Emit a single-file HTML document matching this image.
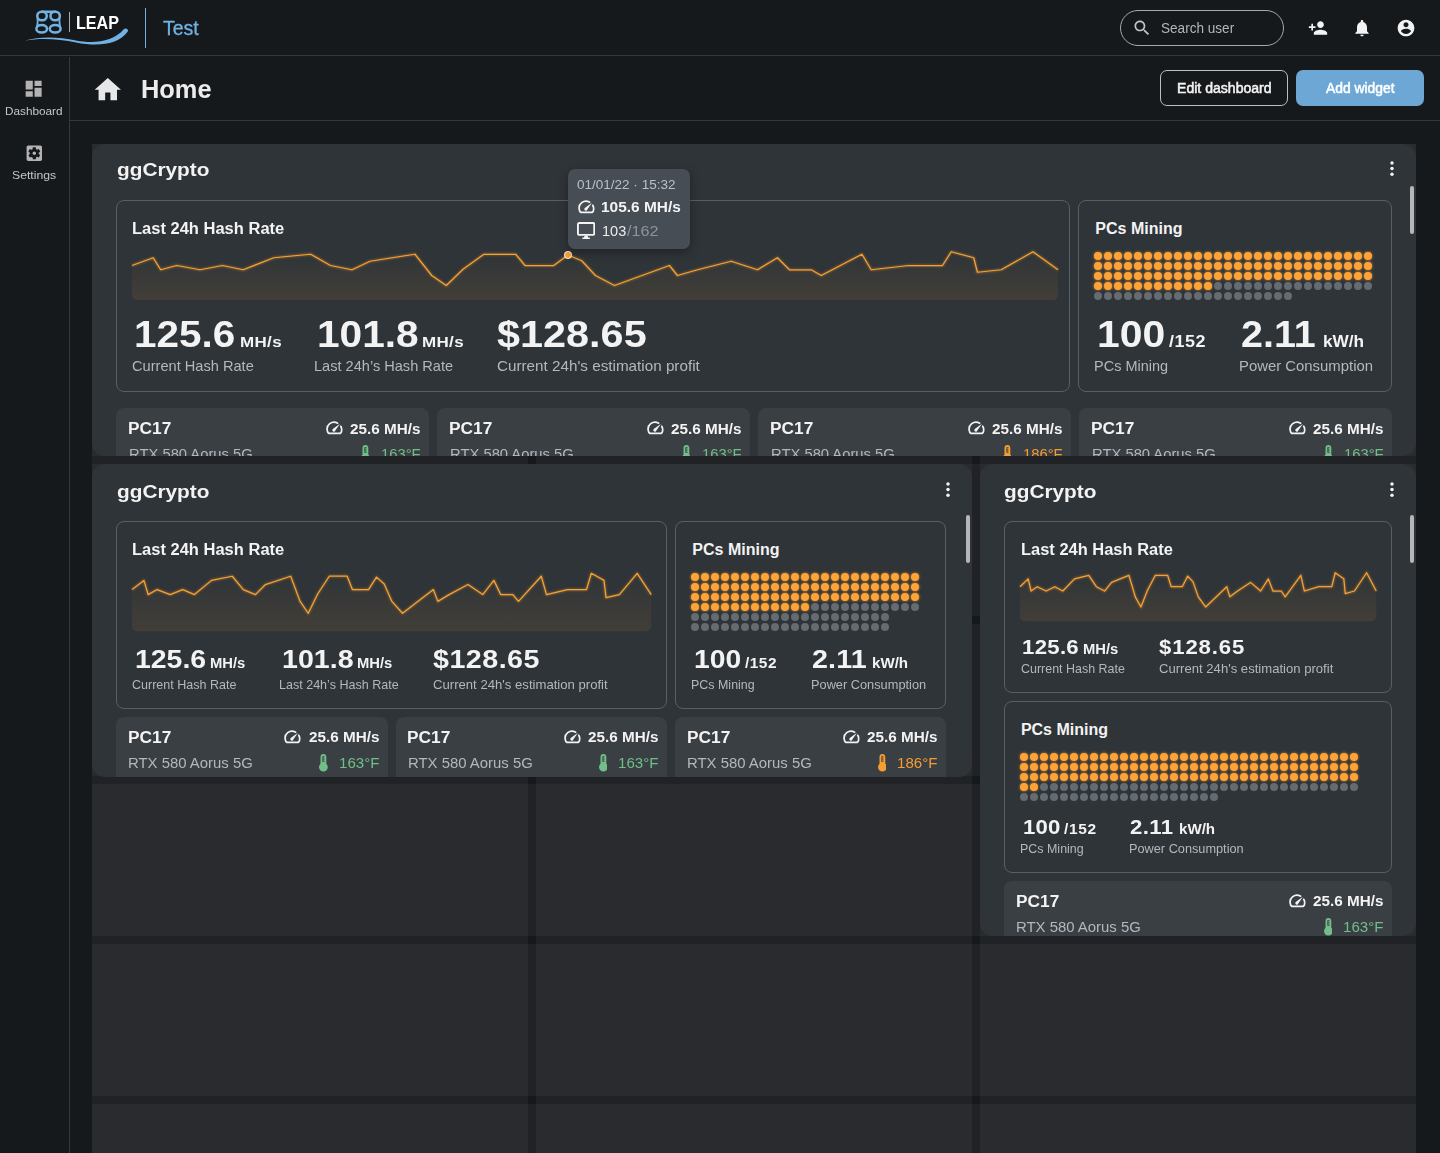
<!DOCTYPE html>
<html lang="en"><head><meta charset="utf-8"><title>ggLeap – Home</title>
<style>
*{box-sizing:border-box;margin:0;padding:0}
html,body{width:1440px;height:1153px;overflow:hidden;background:#16191c}
body{position:relative;font-family:"Liberation Sans",sans-serif;color:#f3f3f3}
.t{position:absolute;white-space:nowrap;transform-origin:0 50%;display:block}
.i{position:absolute;display:block}
.abs{position:absolute}
.w{position:absolute;background:#2f3438;border-radius:13px;overflow:hidden}
.p{position:absolute;border:1px solid #596065;border-radius:8px}
.c{position:absolute;background:#3a3f44;border-radius:8px;height:70px}
.dr{position:absolute;display:flex;gap:2px;height:8px}
.dr i{display:block;width:8px;height:8px;border-radius:50%;background:#646b71}
.dr i.o{background:#ffa336;box-shadow:0 0 3px rgba(255,163,54,.75)}
.sb{position:absolute;width:4px;border-radius:2px;background:#b4b7ba}
.col{position:absolute;top:144px;bottom:0;width:436px;background:rgba(255,255,255,.043)}
.row{position:absolute;left:92px;width:1324px;height:152px;background:rgba(255,255,255,.043)}
</style></head><body>

<header>
<div class="abs" style="left:0;top:55px;width:1440px;height:1px;background:#35393d"></div>
<svg class="i" style="left:20.00px;top:0.00px" width="120" height="56" viewBox="0 0 120 56" ><g fill="none" stroke="#72b2e3" stroke-width="2.5" stroke-linecap="round"><rect x="17.25" y="11.65" width="9.5" height="8.7" rx="4.3"/><rect x="30.45" y="11.65" width="9.4" height="8.7" rx="4.3"/><path d="M22 11.65H35"/><ellipse cx="21.7" cy="28.8" rx="5.35" ry="3.75"/><ellipse cx="35.2" cy="28.8" rx="5.45" ry="3.75"/><path d="M17.6 18Q17.9 22.5 17 27M39.5 18Q39.2 22.5 40.1 27" stroke-width="1.8"/></g><rect x="49" y="12" width="1" height="20" fill="#a9adb0"/><path fill="#72b2e3" d="M5 40.6C22 35.6 40 37.4 56 40.4 74 43.8 93 42 103.8 29.2 105.6 27.2 109.2 29.4 107.6 31.8 97 45.8 76 46.4 56 42.4 40 39.2 22 37.4 5 40.6Z"/></svg>
<span class="t" style="left:76.20px;top:10.00px;font-size:18.3px;line-height:25px;color:#ffffff;font-weight:700;transform:scaleX(0.8817);">LEAP</span>
<div class="abs" style="left:145px;top:8px;width:1.3px;height:40px;background:#72b2e3"></div>
<span class="t" style="left:163.24px;top:15.00px;font-size:19.4px;line-height:26px;color:#72b2e3;transform:scaleX(1.0056);-webkit-text-stroke:.3px;">Test</span>
<div class="abs" style="left:1120px;top:10px;width:164px;height:36px;border:1px solid #a6a9ab;border-radius:18px"></div>
<svg class="i" style="left:1131.80px;top:17.60px" width="20" height="20" viewBox="0 0 24 24" ><path fill="#c2c4c6" d="M15.5 14h-.79l-.28-.27C15.41 12.59 16 11.11 16 9.5 16 5.91 13.09 3 9.5 3S3 5.91 3 9.5 5.91 16 9.5 16c1.61 0 3.09-.59 4.23-1.57l.27.28v.79l5 4.99L20.49 19l-4.99-5zm-6 0C7.01 14 5 11.99 5 9.5S7.01 5 9.5 5 14 7.01 14 9.5 11.99 14 9.5 14z"/></svg>
<span class="t" style="left:1160.52px;top:19.00px;font-size:13.8px;line-height:19px;color:#b4b6b8;transform:scaleX(0.9836);">Search user</span>
<svg class="i" style="left:1308.00px;top:17.70px" width="20" height="20" viewBox="0 0 24 24" ><path fill="#f3f3f3" d="M15 12c2.21 0 4-1.79 4-4s-1.79-4-4-4-4 1.79-4 4 1.79 4 4 4zm-9-2V7H4v3H1v2h3v3h2v-3h3v-2H6zm9 4c-2.67 0-8 1.34-8 4v2h16v-2c0-2.66-5.33-4-8-4z"/></svg>
<svg class="i" style="left:1352.00px;top:18.00px" width="20" height="20" viewBox="0 0 24 24" ><path fill="#f3f3f3" d="M12 22c1.1 0 2-.9 2-2h-4c0 1.1.89 2 2 2zm6-6v-5c0-3.07-1.64-5.64-4.5-6.32V4c0-.83-.67-1.5-1.5-1.5s-1.5.67-1.5 1.5v.68C7.63 5.36 6 7.92 6 11v5l-2 2v1h16v-1l-2-2z"/></svg>
<svg class="i" style="left:1396.00px;top:18.00px" width="20" height="20" viewBox="0 0 24 24" ><path fill="#f3f3f3" d="M12 2C6.48 2 2 6.48 2 12s4.48 10 10 10 10-4.48 10-10S17.52 2 12 2zm0 3c1.66 0 3 1.34 3 3s-1.34 3-3 3-3-1.34-3-3 1.34-3 3-3zm0 14.2c-2.5 0-4.71-1.28-6-3.22.03-1.99 4-3.08 6-3.08 1.99 0 5.97 1.09 6 3.08-1.29 1.94-3.5 3.22-6 3.22z"/></svg>
</header>
<nav>
<div class="abs" style="left:69px;top:57px;width:1px;height:1096px;background:#35393d"></div>
<svg class="i" style="left:23.40px;top:78.20px" width="21.3" height="21.3" viewBox="0 0 24 24" ><path fill="#b3b3b3" d="M3 13h8V3H3v10zm0 8h8v-6H3v6zm10 0h8V11h-8v10zm0-18v6h8V3h-8z"/></svg>
<span class="t" style="left:4.54px;top:103.00px;font-size:11.6px;line-height:16px;color:#c6c6c6;transform:scaleX(1.0137);">Dashboard</span>
<svg class="i" style="left:23.80px;top:142.75px" width="20.6" height="20.6" viewBox="0 0 24 24" ><path fill="#b3b3b3" d="M12 10c-1.1 0-2 .9-2 2s.9 2 2 2 2-.9 2-2-.9-2-2-2zm7-7H5c-1.11 0-2 .9-2 2v14c0 1.1.89 2 2 2h14c1.11 0 2-.9 2-2V5c0-1.1-.89-2-2-2zm-1.75 9c0 .23-.02.46-.05.68l1.48 1.16c.13.11.17.3.08.45l-1.4 2.42c-.09.15-.27.21-.43.15l-1.74-.7c-.36.28-.76.51-1.18.69l-.26 1.85c-.03.17-.18.3-.35.3h-2.8c-.17 0-.32-.13-.35-.29l-.26-1.85c-.43-.18-.82-.41-1.18-.69l-1.74.7c-.16.06-.34 0-.43-.15l-1.4-2.42c-.09-.15-.05-.34.08-.45l1.48-1.16c-.03-.23-.05-.46-.05-.69 0-.23.02-.46.05-.68l-1.48-1.16c-.13-.11-.17-.3-.08-.45l1.4-2.42c.09-.15.27-.21.43-.15l1.74.7c.36-.28.76-.51 1.18-.69l.26-1.85c.03-.17.18-.3.35-.3h2.8c.17 0 .32.13.35.29l.26 1.85c.43.18.82.41 1.18.69l1.74-.7c.16-.06.34 0 .43.15l1.4 2.42c.09.15.05.34-.08.45l-1.48 1.16c.03.23.05.46.05.69z"/></svg>
<span class="t" style="left:11.88px;top:167.00px;font-size:11.6px;line-height:16px;color:#c6c6c6;transform:scaleX(1.0550);">Settings</span>
</nav>
<section>
<div class="abs" style="left:70px;top:120px;width:1370px;height:1px;background:#35393d"></div>
<svg class="i" style="left:92.20px;top:74.40px" width="31.6" height="31.6" viewBox="0 0 24 24" ><path fill="#e6e7e7" d="M10 20v-6h4v6h5v-8h3L12 3 2 12h3v8z"/></svg>
<span class="t" style="left:140.72px;top:73.00px;font-size:25.2px;line-height:32px;color:#ececec;font-weight:700;transform:scaleX(1.0075);">Home</span>
<div class="abs" style="left:1160px;top:70px;width:128px;height:36px;border:1px solid #bcbfc1;border-radius:7px"></div>
<span class="t" style="left:1176.80px;top:79.00px;font-size:13.8px;line-height:19px;color:#f4f4f4;-webkit-text-stroke:.5px;transform:scaleX(1.0193);">Edit dashboard</span>
<div class="abs" style="left:1296px;top:70px;width:128px;height:36px;background:#6ca7d5;border-radius:7px"></div>
<span class="t" style="left:1325.60px;top:79.00px;font-size:13.8px;line-height:19px;color:#ffffff;-webkit-text-stroke:.5px;transform:scaleX(1.0045);">Add widget</span>
</section>
<main>
<div class="col" style="left:92px"></div>
<div class="col" style="left:536px"></div>
<div class="col" style="left:980px"></div>
<div class="row" style="top:144px"></div>
<div class="row" style="top:304px"></div>
<div class="row" style="top:464px"></div>
<div class="row" style="top:624px"></div>
<div class="row" style="top:784px"></div>
<div class="row" style="top:944px"></div>
<div class="row" style="top:1104px"></div>
<article class="w" style="left:92px;top:144px;width:1324px;height:312px"><div class="abs" style="left:-92px;top:-144px;width:0;height:0"><span class="t" style="left:116.79px;top:157.00px;font-size:19px;line-height:25px;color:#f3f3f3;font-weight:700;transform:scaleX(1.0943);">ggCrypto</span><svg class="i" style="left:1389.90px;top:160.50px" width="4" height="15.2" viewBox="0 0 4 15.2" ><circle cx="2" cy="2" r="1.75" fill="#f3f3f3"/><circle cx="2" cy="7.6" r="1.75" fill="#f3f3f3"/><circle cx="2" cy="13.2" r="1.75" fill="#f3f3f3"/></svg><div class="sb" style="left:1410px;top:186px;height:48px"></div><div class="p" style="left:116px;top:200px;width:954px;height:192px"></div><span class="t" style="left:132.44px;top:218.00px;font-size:16px;line-height:21px;color:#f3f3f3;font-weight:700;transform:scaleX(1.0313);">Last 24h Hash Rate</span><svg class="i" style="left:132px;top:246px;overflow:visible" width="926" height="54" viewBox="0 0 926 54"><defs><linearGradient id="cg1" x1="0" y1="0" x2="0" y2="1"><stop offset="0" stop-color="#f7a033" stop-opacity="0"/><stop offset="1" stop-color="#f7a033" stop-opacity="0.097"/></linearGradient><filter id="cf1" x="-5%" y="-30%" width="110%" height="160%"><feGaussianBlur stdDeviation="1.3"/></filter></defs><path d="M0.00 19.50L21.21 11.75L28.71 23.75L44.73 19.50L67.97 23.75L90.47 19.50L111.21 23.75L141.77 11.75L178.72 8.25L198.44 19.50L220.02 23.75L237.98 15.25L282.99 8.25L299.75 29.50L314.28 39.50L331.04 23.25L351.79 8.25L383.73 8.25L392.99 19.50L421.79 19.50L435.96 9.00L449.76 14.75L463.46 29.50L482.45 39.50L537.45 19.50L545.41 29.50L565.51 23.75L599.21 15.25L625.51 23.75L645.42 11.75L657.46 23.75L679.22 23.75L689.22 29.50L729.97 8.25L739.23 23.75L776.73 19.50L810.53 19.50L819.23 5.75L841.73 11.75L845.44 26.25L869.24 23.75L901.00 5.75L926.00 23.75L926.00 48.00Q926.00 54.00 920.00 54.00L6 54.00Q0 54.00 0 48.00Z" fill="url(#cg1)"/><path d="M0.00 19.50L21.21 11.75L28.71 23.75L44.73 19.50L67.97 23.75L90.47 19.50L111.21 23.75L141.77 11.75L178.72 8.25L198.44 19.50L220.02 23.75L237.98 15.25L282.99 8.25L299.75 29.50L314.28 39.50L331.04 23.25L351.79 8.25L383.73 8.25L392.99 19.50L421.79 19.50L435.96 9.00L449.76 14.75L463.46 29.50L482.45 39.50L537.45 19.50L545.41 29.50L565.51 23.75L599.21 15.25L625.51 23.75L645.42 11.75L657.46 23.75L679.22 23.75L689.22 29.50L729.97 8.25L739.23 23.75L776.73 19.50L810.53 19.50L819.23 5.75L841.73 11.75L845.44 26.25L869.24 23.75L901.00 5.75L926.00 23.75" fill="none" stroke="#f7a033" stroke-opacity=".4" stroke-width="2.2" filter="url(#cf1)"/><path d="M0.00 19.50L21.21 11.75L28.71 23.75L44.73 19.50L67.97 23.75L90.47 19.50L111.21 23.75L141.77 11.75L178.72 8.25L198.44 19.50L220.02 23.75L237.98 15.25L282.99 8.25L299.75 29.50L314.28 39.50L331.04 23.25L351.79 8.25L383.73 8.25L392.99 19.50L421.79 19.50L435.96 9.00L449.76 14.75L463.46 29.50L482.45 39.50L537.45 19.50L545.41 29.50L565.51 23.75L599.21 15.25L625.51 23.75L645.42 11.75L657.46 23.75L679.22 23.75L689.22 29.50L729.97 8.25L739.23 23.75L776.73 19.50L810.53 19.50L819.23 5.75L841.73 11.75L845.44 26.25L869.24 23.75L901.00 5.75L926.00 23.75" fill="none" stroke="#f7a033" stroke-width="1.25" stroke-linejoin="round"/></svg><span class="t" style="left:134.19px;top:311.00px;font-size:37.6px;line-height:46px;color:#f3f3f3;font-weight:700;transform:scaleX(1.0763);">125.6</span><span class="t" style="left:239.54px;top:331.00px;font-size:15.2px;line-height:21px;color:#f3f3f3;font-weight:700;letter-spacing:0.292px;transform:scaleX(1.1200);">MH/s</span><span class="t" style="left:132.34px;top:356.00px;font-size:14.2px;line-height:20px;color:#b3b8bd;transform:scaleX(1.0297);">Current Hash Rate</span><span class="t" style="left:316.64px;top:311.00px;font-size:37.6px;line-height:46px;color:#f3f3f3;font-weight:700;transform:scaleX(1.0810);">101.8</span><span class="t" style="left:421.54px;top:331.00px;font-size:15.2px;line-height:21px;color:#f3f3f3;font-weight:700;letter-spacing:0.292px;transform:scaleX(1.1200);">MH/s</span><span class="t" style="left:313.54px;top:356.00px;font-size:14.2px;line-height:20px;color:#b3b8bd;transform:scaleX(1.0272);">Last 24h’s Hash Rate</span><span class="t" style="left:497.24px;top:311.00px;font-size:37.6px;line-height:46px;color:#f3f3f3;font-weight:700;transform:scaleX(1.1019);">$128.65</span><span class="t" style="left:496.79px;top:356.00px;font-size:14.2px;line-height:20px;color:#b3b8bd;transform:scaleX(1.0739);">Current 24h&#x27;s estimation profit</span><div class="p" style="left:1078px;top:200px;width:314px;height:192px"></div><span class="t" style="left:1095.34px;top:218.00px;font-size:16px;line-height:21px;color:#f3f3f3;font-weight:700;">PCs Mining</span><div class="dr" style="left:1094px;top:252.2px"><i class="o"></i><i class="o"></i><i class="o"></i><i class="o"></i><i class="o"></i><i class="o"></i><i class="o"></i><i class="o"></i><i class="o"></i><i class="o"></i><i class="o"></i><i class="o"></i><i class="o"></i><i class="o"></i><i class="o"></i><i class="o"></i><i class="o"></i><i class="o"></i><i class="o"></i><i class="o"></i><i class="o"></i><i class="o"></i><i class="o"></i><i class="o"></i><i class="o"></i><i class="o"></i><i class="o"></i><i class="o"></i></div><div class="dr" style="left:1094px;top:262.2px"><i class="o"></i><i class="o"></i><i class="o"></i><i class="o"></i><i class="o"></i><i class="o"></i><i class="o"></i><i class="o"></i><i class="o"></i><i class="o"></i><i class="o"></i><i class="o"></i><i class="o"></i><i class="o"></i><i class="o"></i><i class="o"></i><i class="o"></i><i class="o"></i><i class="o"></i><i class="o"></i><i class="o"></i><i class="o"></i><i class="o"></i><i class="o"></i><i class="o"></i><i class="o"></i><i class="o"></i><i class="o"></i></div><div class="dr" style="left:1094px;top:272.2px"><i class="o"></i><i class="o"></i><i class="o"></i><i class="o"></i><i class="o"></i><i class="o"></i><i class="o"></i><i class="o"></i><i class="o"></i><i class="o"></i><i class="o"></i><i class="o"></i><i class="o"></i><i class="o"></i><i class="o"></i><i class="o"></i><i class="o"></i><i class="o"></i><i class="o"></i><i class="o"></i><i class="o"></i><i class="o"></i><i class="o"></i><i class="o"></i><i class="o"></i><i class="o"></i><i class="o"></i><i class="o"></i></div><div class="dr" style="left:1094px;top:282.2px"><i class="o"></i><i class="o"></i><i class="o"></i><i class="o"></i><i class="o"></i><i class="o"></i><i class="o"></i><i class="o"></i><i class="o"></i><i class="o"></i><i class="o"></i><i class="o"></i><i></i><i></i><i></i><i></i><i></i><i></i><i></i><i></i><i></i><i></i><i></i><i></i><i></i><i></i><i></i><i></i></div><div class="dr" style="left:1094px;top:292.2px"><i></i><i></i><i></i><i></i><i></i><i></i><i></i><i></i><i></i><i></i><i></i><i></i><i></i><i></i><i></i><i></i><i></i><i></i><i></i><i></i></div><span class="t" style="left:1096.64px;top:311.00px;font-size:37.6px;line-height:46px;color:#f3f3f3;font-weight:700;transform:scaleX(1.0872);">100</span><span class="t" style="left:1168.79px;top:331.00px;font-size:16px;line-height:21px;color:#f3f3f3;font-weight:700;letter-spacing:0.496px;transform:scaleX(1.1200);">/152</span><span class="t" style="left:1093.54px;top:356.00px;font-size:14.2px;line-height:20px;color:#b3b8bd;transform:scaleX(1.0218);">PCs Mining</span><span class="t" style="left:1240.89px;top:311.00px;font-size:37.6px;line-height:46px;color:#f3f3f3;font-weight:700;transform:scaleX(1.0507);">2.11</span><span class="t" style="left:1322.99px;top:330.00px;font-size:16.4px;line-height:22px;color:#f3f3f3;font-weight:700;transform:scaleX(1.0491);">kW/h</span><span class="t" style="left:1238.54px;top:356.00px;font-size:14.2px;line-height:20px;color:#b3b8bd;transform:scaleX(1.0489);">Power Consumption</span><div class="c" style="left:116px;top:408.2px;width:313px"></div><span class="t" style="left:127.89px;top:418.00px;font-size:16px;line-height:21px;color:#f3f3f3;font-weight:700;transform:scaleX(1.0805);">PC17</span><span class="t" style="left:349.79px;top:419.00px;font-size:14.8px;line-height:20px;color:#f3f3f3;font-weight:700;transform:scaleX(1.0312);">25.6 MH/s</span><svg class="i" style="left:325.60px;top:420.70px" width="17" height="14.2" viewBox="0 0 18 15" ><g fill="none" stroke="#f3f3f3" stroke-width="1.8" stroke-linecap="round" stroke-linejoin="round"><path d="M12.3 2.3A7.3 7.3 0 0 0 1.6 10.9Q1.9 13.1 4.0 13.1L14.0 13.1Q16.1 13.1 16.4 10.9A7.3 7.3 0 0 0 15.6 5.6"/></g><path fill="#f3f3f3" d="M14.8 2.8L9.9 10.1A1.65 1.65 0 1 1 7.5 8.1Z"/></svg><span class="t" style="left:128.60px;top:444.00px;font-size:14px;line-height:20px;color:#b3b8bd;transform:scaleX(1.0559);">RTX 580 Aorus 5G</span><span class="t" style="left:381.00px;top:444.00px;font-size:14px;line-height:20px;color:#72bd88;transform:scaleX(1.0554);">163°F</span><svg class="i" style="left:360.65px;top:445.25px" width="8.8" height="17.65" viewBox="0 0 8.8 17.65" ><path fill="#72bd88" d="M4.4 0A2.9 2.9 0 0 1 7.3 2.9V9.8A4.4 4.4 0 1 1 1.5 9.8V2.9A2.9 2.9 0 0 1 4.4 0Z"/><path fill="#2c3540" fill-opacity=".9" d="M3.35 2.3h2.2v.95h-1.2v1.3h1.2v.95h-1.2v1.3h1.2v.95h-2.2z"/></svg><div class="c" style="left:437px;top:408.2px;width:313px"></div><span class="t" style="left:448.89px;top:418.00px;font-size:16px;line-height:21px;color:#f3f3f3;font-weight:700;transform:scaleX(1.0805);">PC17</span><span class="t" style="left:670.79px;top:419.00px;font-size:14.8px;line-height:20px;color:#f3f3f3;font-weight:700;transform:scaleX(1.0312);">25.6 MH/s</span><svg class="i" style="left:646.60px;top:420.70px" width="17" height="14.2" viewBox="0 0 18 15" ><g fill="none" stroke="#f3f3f3" stroke-width="1.8" stroke-linecap="round" stroke-linejoin="round"><path d="M12.3 2.3A7.3 7.3 0 0 0 1.6 10.9Q1.9 13.1 4.0 13.1L14.0 13.1Q16.1 13.1 16.4 10.9A7.3 7.3 0 0 0 15.6 5.6"/></g><path fill="#f3f3f3" d="M14.8 2.8L9.9 10.1A1.65 1.65 0 1 1 7.5 8.1Z"/></svg><span class="t" style="left:449.60px;top:444.00px;font-size:14px;line-height:20px;color:#b3b8bd;transform:scaleX(1.0559);">RTX 580 Aorus 5G</span><span class="t" style="left:702.00px;top:444.00px;font-size:14px;line-height:20px;color:#72bd88;transform:scaleX(1.0554);">163°F</span><svg class="i" style="left:681.65px;top:445.25px" width="8.8" height="17.65" viewBox="0 0 8.8 17.65" ><path fill="#72bd88" d="M4.4 0A2.9 2.9 0 0 1 7.3 2.9V9.8A4.4 4.4 0 1 1 1.5 9.8V2.9A2.9 2.9 0 0 1 4.4 0Z"/><path fill="#2c3540" fill-opacity=".9" d="M3.35 2.3h2.2v.95h-1.2v1.3h1.2v.95h-1.2v1.3h1.2v.95h-2.2z"/></svg><div class="c" style="left:758px;top:408.2px;width:313px"></div><span class="t" style="left:769.89px;top:418.00px;font-size:16px;line-height:21px;color:#f3f3f3;font-weight:700;transform:scaleX(1.0805);">PC17</span><span class="t" style="left:991.79px;top:419.00px;font-size:14.8px;line-height:20px;color:#f3f3f3;font-weight:700;transform:scaleX(1.0312);">25.6 MH/s</span><svg class="i" style="left:967.60px;top:420.70px" width="17" height="14.2" viewBox="0 0 18 15" ><g fill="none" stroke="#f3f3f3" stroke-width="1.8" stroke-linecap="round" stroke-linejoin="round"><path d="M12.3 2.3A7.3 7.3 0 0 0 1.6 10.9Q1.9 13.1 4.0 13.1L14.0 13.1Q16.1 13.1 16.4 10.9A7.3 7.3 0 0 0 15.6 5.6"/></g><path fill="#f3f3f3" d="M14.8 2.8L9.9 10.1A1.65 1.65 0 1 1 7.5 8.1Z"/></svg><span class="t" style="left:770.60px;top:444.00px;font-size:14px;line-height:20px;color:#b3b8bd;transform:scaleX(1.0559);">RTX 580 Aorus 5G</span><span class="t" style="left:1023.00px;top:444.00px;font-size:14px;line-height:20px;color:#f59d32;transform:scaleX(1.0554);">186°F</span><svg class="i" style="left:1002.65px;top:445.25px" width="8.8" height="17.65" viewBox="0 0 8.8 17.65" ><path fill="#f59d32" d="M4.4 0A2.9 2.9 0 0 1 7.3 2.9V9.8A4.4 4.4 0 1 1 1.5 9.8V2.9A2.9 2.9 0 0 1 4.4 0Z"/><path fill="#2c3540" fill-opacity=".9" d="M3.35 2.3h2.2v.95h-1.2v1.3h1.2v.95h-1.2v1.3h1.2v.95h-2.2z"/></svg><div class="c" style="left:1079px;top:408.2px;width:313px"></div><span class="t" style="left:1090.89px;top:418.00px;font-size:16px;line-height:21px;color:#f3f3f3;font-weight:700;transform:scaleX(1.0805);">PC17</span><span class="t" style="left:1312.79px;top:419.00px;font-size:14.8px;line-height:20px;color:#f3f3f3;font-weight:700;transform:scaleX(1.0312);">25.6 MH/s</span><svg class="i" style="left:1288.60px;top:420.70px" width="17" height="14.2" viewBox="0 0 18 15" ><g fill="none" stroke="#f3f3f3" stroke-width="1.8" stroke-linecap="round" stroke-linejoin="round"><path d="M12.3 2.3A7.3 7.3 0 0 0 1.6 10.9Q1.9 13.1 4.0 13.1L14.0 13.1Q16.1 13.1 16.4 10.9A7.3 7.3 0 0 0 15.6 5.6"/></g><path fill="#f3f3f3" d="M14.8 2.8L9.9 10.1A1.65 1.65 0 1 1 7.5 8.1Z"/></svg><span class="t" style="left:1091.60px;top:444.00px;font-size:14px;line-height:20px;color:#b3b8bd;transform:scaleX(1.0559);">RTX 580 Aorus 5G</span><span class="t" style="left:1344.00px;top:444.00px;font-size:14px;line-height:20px;color:#72bd88;transform:scaleX(1.0554);">163°F</span><svg class="i" style="left:1323.65px;top:445.25px" width="8.8" height="17.65" viewBox="0 0 8.8 17.65" ><path fill="#72bd88" d="M4.4 0A2.9 2.9 0 0 1 7.3 2.9V9.8A4.4 4.4 0 1 1 1.5 9.8V2.9A2.9 2.9 0 0 1 4.4 0Z"/><path fill="#2c3540" fill-opacity=".9" d="M3.35 2.3h2.2v.95h-1.2v1.3h1.2v.95h-1.2v1.3h1.2v.95h-2.2z"/></svg></div></article>
<article class="w" style="left:92px;top:464px;width:880px;height:312.6px"><div class="abs" style="left:-92px;top:-464px;width:0;height:0"><span class="t" style="left:116.79px;top:479.00px;font-size:19px;line-height:25px;color:#f3f3f3;font-weight:700;transform:scaleX(1.0943);">ggCrypto</span><svg class="i" style="left:946.00px;top:481.50px" width="4" height="15.2" viewBox="0 0 4 15.2" ><circle cx="2" cy="2" r="1.75" fill="#f3f3f3"/><circle cx="2" cy="7.6" r="1.75" fill="#f3f3f3"/><circle cx="2" cy="13.2" r="1.75" fill="#f3f3f3"/></svg><div class="sb" style="left:966px;top:515px;height:48px"></div><div class="p" style="left:116px;top:521px;width:551px;height:188px"></div><span class="t" style="left:132.44px;top:539.00px;font-size:16px;line-height:21px;color:#f3f3f3;font-weight:700;transform:scaleX(1.0313);">Last 24h Hash Rate</span><svg class="i" style="left:132px;top:566px;overflow:visible" width="519.25" height="65.20000000000005" viewBox="0 0 519.25 65.20000000000005"><defs><linearGradient id="cg2" x1="0" y1="0" x2="0" y2="1"><stop offset="0" stop-color="#f7a033" stop-opacity="0"/><stop offset="1" stop-color="#f7a033" stop-opacity="0.097"/></linearGradient><filter id="cf2" x="-5%" y="-30%" width="110%" height="160%"><feGaussianBlur stdDeviation="1.3"/></filter></defs><path d="M0.00 23.57L11.89 14.39L16.10 28.60L25.08 23.57L38.11 28.60L50.73 23.57L62.36 28.60L79.50 14.39L100.22 10.25L111.28 23.57L123.37 28.60L133.45 18.54L158.68 10.25L168.08 35.41L176.23 47.25L185.63 28.01L197.26 10.25L215.18 10.25L220.37 23.57L236.52 23.57L244.46 11.14L252.20 17.95L259.88 35.41L270.53 47.25L301.37 23.57L305.84 35.41L317.11 28.60L336.01 18.54L350.75 28.60L361.92 14.39L368.67 28.60L380.87 28.60L386.48 35.41L409.32 10.25L414.52 28.60L435.55 23.57L454.50 23.57L459.38 7.29L472.00 14.39L474.08 31.56L487.42 28.60L505.23 7.29L519.25 28.60L519.25 59.20Q519.25 65.20 513.25 65.20L6 65.20Q0 65.20 0 59.20Z" fill="url(#cg2)"/><path d="M0.00 23.57L11.89 14.39L16.10 28.60L25.08 23.57L38.11 28.60L50.73 23.57L62.36 28.60L79.50 14.39L100.22 10.25L111.28 23.57L123.37 28.60L133.45 18.54L158.68 10.25L168.08 35.41L176.23 47.25L185.63 28.01L197.26 10.25L215.18 10.25L220.37 23.57L236.52 23.57L244.46 11.14L252.20 17.95L259.88 35.41L270.53 47.25L301.37 23.57L305.84 35.41L317.11 28.60L336.01 18.54L350.75 28.60L361.92 14.39L368.67 28.60L380.87 28.60L386.48 35.41L409.32 10.25L414.52 28.60L435.55 23.57L454.50 23.57L459.38 7.29L472.00 14.39L474.08 31.56L487.42 28.60L505.23 7.29L519.25 28.60" fill="none" stroke="#f7a033" stroke-opacity=".4" stroke-width="2.2" filter="url(#cf2)"/><path d="M0.00 23.57L11.89 14.39L16.10 28.60L25.08 23.57L38.11 28.60L50.73 23.57L62.36 28.60L79.50 14.39L100.22 10.25L111.28 23.57L123.37 28.60L133.45 18.54L158.68 10.25L168.08 35.41L176.23 47.25L185.63 28.01L197.26 10.25L215.18 10.25L220.37 23.57L236.52 23.57L244.46 11.14L252.20 17.95L259.88 35.41L270.53 47.25L301.37 23.57L305.84 35.41L317.11 28.60L336.01 18.54L350.75 28.60L361.92 14.39L368.67 28.60L380.87 28.60L386.48 35.41L409.32 10.25L414.52 28.60L435.55 23.57L454.50 23.57L459.38 7.29L472.00 14.39L474.08 31.56L487.42 28.60L505.23 7.29L519.25 28.60" fill="none" stroke="#f7a033" stroke-width="1.25" stroke-linejoin="round"/></svg><span class="t" style="left:134.99px;top:643.00px;font-size:25.6px;line-height:32px;color:#f3f3f3;font-weight:700;transform:scaleX(1.1106);">125.6</span><span class="t" style="left:209.99px;top:654.00px;font-size:13.8px;line-height:19px;color:#f3f3f3;font-weight:700;transform:scaleX(1.0709);">MH/s</span><span class="t" style="left:132.34px;top:676.00px;font-size:12.2px;line-height:18px;color:#b3b8bd;transform:scaleX(1.0269);">Current Hash Rate</span><span class="t" style="left:281.54px;top:643.00px;font-size:25.6px;line-height:32px;color:#f3f3f3;font-weight:700;transform:scaleX(1.1176);">101.8</span><span class="t" style="left:356.54px;top:654.00px;font-size:13.8px;line-height:19px;color:#f3f3f3;font-weight:700;transform:scaleX(1.0709);">MH/s</span><span class="t" style="left:278.54px;top:676.00px;font-size:12.2px;line-height:18px;color:#b3b8bd;transform:scaleX(1.0285);">Last 24h’s Hash Rate</span><span class="t" style="left:433.24px;top:643.00px;font-size:25.6px;line-height:32px;color:#f3f3f3;font-weight:700;letter-spacing:0.427px;transform:scaleX(1.1200);">$128.65</span><span class="t" style="left:432.78px;top:676.00px;font-size:12.2px;line-height:18px;color:#b3b8bd;transform:scaleX(1.0770);">Current 24h&#x27;s estimation profit</span><div class="p" style="left:675px;top:521px;width:271px;height:188px"></div><span class="t" style="left:692.34px;top:539.00px;font-size:16px;line-height:21px;color:#f3f3f3;font-weight:700;">PCs Mining</span><div class="dr" style="left:691px;top:573px"><i class="o"></i><i class="o"></i><i class="o"></i><i class="o"></i><i class="o"></i><i class="o"></i><i class="o"></i><i class="o"></i><i class="o"></i><i class="o"></i><i class="o"></i><i class="o"></i><i class="o"></i><i class="o"></i><i class="o"></i><i class="o"></i><i class="o"></i><i class="o"></i><i class="o"></i><i class="o"></i><i class="o"></i><i class="o"></i><i class="o"></i></div><div class="dr" style="left:691px;top:583px"><i class="o"></i><i class="o"></i><i class="o"></i><i class="o"></i><i class="o"></i><i class="o"></i><i class="o"></i><i class="o"></i><i class="o"></i><i class="o"></i><i class="o"></i><i class="o"></i><i class="o"></i><i class="o"></i><i class="o"></i><i class="o"></i><i class="o"></i><i class="o"></i><i class="o"></i><i class="o"></i><i class="o"></i><i class="o"></i><i class="o"></i></div><div class="dr" style="left:691px;top:593px"><i class="o"></i><i class="o"></i><i class="o"></i><i class="o"></i><i class="o"></i><i class="o"></i><i class="o"></i><i class="o"></i><i class="o"></i><i class="o"></i><i class="o"></i><i class="o"></i><i class="o"></i><i class="o"></i><i class="o"></i><i class="o"></i><i class="o"></i><i class="o"></i><i class="o"></i><i class="o"></i><i class="o"></i><i class="o"></i><i class="o"></i></div><div class="dr" style="left:691px;top:603px"><i class="o"></i><i class="o"></i><i class="o"></i><i class="o"></i><i class="o"></i><i class="o"></i><i class="o"></i><i class="o"></i><i class="o"></i><i class="o"></i><i class="o"></i><i class="o"></i><i></i><i></i><i></i><i></i><i></i><i></i><i></i><i></i><i></i><i></i><i></i></div><div class="dr" style="left:691px;top:613px"><i></i><i></i><i></i><i></i><i></i><i></i><i></i><i></i><i></i><i></i><i></i><i></i><i></i><i></i><i></i><i></i><i></i><i></i><i></i><i></i></div><div class="dr" style="left:691px;top:623px"><i></i><i></i><i></i><i></i><i></i><i></i><i></i><i></i><i></i><i></i><i></i><i></i><i></i><i></i><i></i><i></i><i></i><i></i><i></i><i></i></div><span class="t" style="left:693.89px;top:643.00px;font-size:25.6px;line-height:32px;color:#f3f3f3;font-weight:700;transform:scaleX(1.1045);">100</span><span class="t" style="left:745.34px;top:654.00px;font-size:13.8px;line-height:19px;color:#f3f3f3;font-weight:700;letter-spacing:0.434px;transform:scaleX(1.1200);">/152</span><span class="t" style="left:690.89px;top:676.00px;font-size:12.2px;line-height:18px;color:#b3b8bd;transform:scaleX(1.0219);">PCs Mining</span><span class="t" style="left:811.54px;top:643.00px;font-size:25.6px;line-height:32px;color:#f3f3f3;font-weight:700;letter-spacing:0.143px;transform:scaleX(1.1200);">2.11</span><span class="t" style="left:871.54px;top:654.00px;font-size:13.8px;line-height:19px;color:#f3f3f3;font-weight:700;transform:scaleX(1.0951);">kW/h</span><span class="t" style="left:810.89px;top:676.00px;font-size:12.2px;line-height:18px;color:#b3b8bd;transform:scaleX(1.0488);">Power Consumption</span><div class="c" style="left:116px;top:717.2px;width:271.5px"></div><span class="t" style="left:127.89px;top:727.00px;font-size:16px;line-height:21px;color:#f3f3f3;font-weight:700;transform:scaleX(1.0805);">PC17</span><span class="t" style="left:308.69px;top:727.00px;font-size:14.8px;line-height:20px;color:#f3f3f3;font-weight:700;transform:scaleX(1.0312);">25.6 MH/s</span><svg class="i" style="left:284.10px;top:729.70px" width="17" height="14.2" viewBox="0 0 18 15" ><g fill="none" stroke="#f3f3f3" stroke-width="1.8" stroke-linecap="round" stroke-linejoin="round"><path d="M12.3 2.3A7.3 7.3 0 0 0 1.6 10.9Q1.9 13.1 4.0 13.1L14.0 13.1Q16.1 13.1 16.4 10.9A7.3 7.3 0 0 0 15.6 5.6"/></g><path fill="#f3f3f3" d="M14.8 2.8L9.9 10.1A1.65 1.65 0 1 1 7.5 8.1Z"/></svg><span class="t" style="left:127.72px;top:753.00px;font-size:14px;line-height:20px;color:#b3b8bd;transform:scaleX(1.0641);">RTX 580 Aorus 5G</span><span class="t" style="left:338.54px;top:753.00px;font-size:14px;line-height:20px;color:#72bd88;transform:scaleX(1.0768);">163°F</span><svg class="i" style="left:319.15px;top:754.25px" width="8.8" height="17.65" viewBox="0 0 8.8 17.65" ><path fill="#72bd88" d="M4.4 0A2.9 2.9 0 0 1 7.3 2.9V9.8A4.4 4.4 0 1 1 1.5 9.8V2.9A2.9 2.9 0 0 1 4.4 0Z"/><path fill="#2c3540" fill-opacity=".9" d="M3.35 2.3h2.2v.95h-1.2v1.3h1.2v.95h-1.2v1.3h1.2v.95h-2.2z"/></svg><div class="c" style="left:395.5px;top:717.2px;width:271.5px"></div><span class="t" style="left:406.99px;top:727.00px;font-size:16px;line-height:21px;color:#f3f3f3;font-weight:700;transform:scaleX(1.0805);">PC17</span><span class="t" style="left:587.79px;top:727.00px;font-size:14.8px;line-height:20px;color:#f3f3f3;font-weight:700;transform:scaleX(1.0312);">25.6 MH/s</span><svg class="i" style="left:563.60px;top:729.70px" width="17" height="14.2" viewBox="0 0 18 15" ><g fill="none" stroke="#f3f3f3" stroke-width="1.8" stroke-linecap="round" stroke-linejoin="round"><path d="M12.3 2.3A7.3 7.3 0 0 0 1.6 10.9Q1.9 13.1 4.0 13.1L14.0 13.1Q16.1 13.1 16.4 10.9A7.3 7.3 0 0 0 15.6 5.6"/></g><path fill="#f3f3f3" d="M14.8 2.8L9.9 10.1A1.65 1.65 0 1 1 7.5 8.1Z"/></svg><span class="t" style="left:407.62px;top:753.00px;font-size:14px;line-height:20px;color:#b3b8bd;transform:scaleX(1.0641);">RTX 580 Aorus 5G</span><span class="t" style="left:618.44px;top:753.00px;font-size:14px;line-height:20px;color:#72bd88;transform:scaleX(1.0768);">163°F</span><svg class="i" style="left:598.65px;top:754.25px" width="8.8" height="17.65" viewBox="0 0 8.8 17.65" ><path fill="#72bd88" d="M4.4 0A2.9 2.9 0 0 1 7.3 2.9V9.8A4.4 4.4 0 1 1 1.5 9.8V2.9A2.9 2.9 0 0 1 4.4 0Z"/><path fill="#2c3540" fill-opacity=".9" d="M3.35 2.3h2.2v.95h-1.2v1.3h1.2v.95h-1.2v1.3h1.2v.95h-2.2z"/></svg><div class="c" style="left:675px;top:717.2px;width:271px"></div><span class="t" style="left:686.89px;top:727.00px;font-size:16px;line-height:21px;color:#f3f3f3;font-weight:700;transform:scaleX(1.0805);">PC17</span><span class="t" style="left:866.79px;top:727.00px;font-size:14.8px;line-height:20px;color:#f3f3f3;font-weight:700;transform:scaleX(1.0312);">25.6 MH/s</span><svg class="i" style="left:842.60px;top:729.70px" width="17" height="14.2" viewBox="0 0 18 15" ><g fill="none" stroke="#f3f3f3" stroke-width="1.8" stroke-linecap="round" stroke-linejoin="round"><path d="M12.3 2.3A7.3 7.3 0 0 0 1.6 10.9Q1.9 13.1 4.0 13.1L14.0 13.1Q16.1 13.1 16.4 10.9A7.3 7.3 0 0 0 15.6 5.6"/></g><path fill="#f3f3f3" d="M14.8 2.8L9.9 10.1A1.65 1.65 0 1 1 7.5 8.1Z"/></svg><span class="t" style="left:686.72px;top:753.00px;font-size:14px;line-height:20px;color:#b3b8bd;transform:scaleX(1.0641);">RTX 580 Aorus 5G</span><span class="t" style="left:897.44px;top:753.00px;font-size:14px;line-height:20px;color:#f59d32;transform:scaleX(1.0768);">186°F</span><svg class="i" style="left:877.65px;top:754.25px" width="8.8" height="17.65" viewBox="0 0 8.8 17.65" ><path fill="#f59d32" d="M4.4 0A2.9 2.9 0 0 1 7.3 2.9V9.8A4.4 4.4 0 1 1 1.5 9.8V2.9A2.9 2.9 0 0 1 4.4 0Z"/><path fill="#2c3540" fill-opacity=".9" d="M3.35 2.3h2.2v.95h-1.2v1.3h1.2v.95h-1.2v1.3h1.2v.95h-2.2z"/></svg></div></article>
<article class="w" style="left:980px;top:464px;width:436px;height:471.8px"><div class="abs" style="left:-980px;top:-464px;width:0;height:0"><span class="t" style="left:1004.34px;top:479.00px;font-size:19px;line-height:25px;color:#f3f3f3;font-weight:700;transform:scaleX(1.0943);">ggCrypto</span><svg class="i" style="left:1389.90px;top:481.50px" width="4" height="15.2" viewBox="0 0 4 15.2" ><circle cx="2" cy="2" r="1.75" fill="#f3f3f3"/><circle cx="2" cy="7.6" r="1.75" fill="#f3f3f3"/><circle cx="2" cy="13.2" r="1.75" fill="#f3f3f3"/></svg><div class="sb" style="left:1410px;top:515px;height:48px"></div><div class="p" style="left:1004px;top:521px;width:388px;height:171.5px"></div><span class="t" style="left:1020.89px;top:539.00px;font-size:16px;line-height:21px;color:#f3f3f3;font-weight:700;transform:scaleX(1.0283);">Last 24h Hash Rate</span><svg class="i" style="left:1020px;top:566px;overflow:visible" width="356.25" height="55.299999999999955" viewBox="0 0 356.25 55.299999999999955"><defs><linearGradient id="cg3" x1="0" y1="0" x2="0" y2="1"><stop offset="0" stop-color="#f7a033" stop-opacity="0"/><stop offset="1" stop-color="#f7a033" stop-opacity="0.097"/></linearGradient><filter id="cf3" x="-5%" y="-30%" width="110%" height="160%"><feGaussianBlur stdDeviation="1.3"/></filter></defs><path d="M0.00 20.71L8.16 12.85L11.04 25.02L17.21 20.71L26.15 25.02L34.81 20.71L42.79 25.02L54.54 12.85L68.76 9.30L76.34 20.71L84.64 25.02L91.56 16.40L108.87 9.30L115.32 30.85L120.91 40.99L127.36 24.51L135.34 9.30L147.63 9.30L151.19 20.71L162.27 20.71L167.72 10.06L173.03 15.89L178.30 30.85L185.61 40.99L206.77 20.71L209.83 30.85L217.56 25.02L230.53 16.40L240.65 25.02L248.31 12.85L252.94 25.02L261.31 25.02L265.16 30.85L280.83 9.30L284.39 25.02L298.82 20.71L311.83 20.71L315.17 6.76L323.83 12.85L325.26 27.55L334.41 25.02L346.63 6.76L356.25 25.02L356.25 49.30Q356.25 55.30 350.25 55.30L6 55.30Q0 55.30 0 49.30Z" fill="url(#cg3)"/><path d="M0.00 20.71L8.16 12.85L11.04 25.02L17.21 20.71L26.15 25.02L34.81 20.71L42.79 25.02L54.54 12.85L68.76 9.30L76.34 20.71L84.64 25.02L91.56 16.40L108.87 9.30L115.32 30.85L120.91 40.99L127.36 24.51L135.34 9.30L147.63 9.30L151.19 20.71L162.27 20.71L167.72 10.06L173.03 15.89L178.30 30.85L185.61 40.99L206.77 20.71L209.83 30.85L217.56 25.02L230.53 16.40L240.65 25.02L248.31 12.85L252.94 25.02L261.31 25.02L265.16 30.85L280.83 9.30L284.39 25.02L298.82 20.71L311.83 20.71L315.17 6.76L323.83 12.85L325.26 27.55L334.41 25.02L346.63 6.76L356.25 25.02" fill="none" stroke="#f7a033" stroke-opacity=".4" stroke-width="2.2" filter="url(#cf3)"/><path d="M0.00 20.71L8.16 12.85L11.04 25.02L17.21 20.71L26.15 25.02L34.81 20.71L42.79 25.02L54.54 12.85L68.76 9.30L76.34 20.71L84.64 25.02L91.56 16.40L108.87 9.30L115.32 30.85L120.91 40.99L127.36 24.51L135.34 9.30L147.63 9.30L151.19 20.71L162.27 20.71L167.72 10.06L173.03 15.89L178.30 30.85L185.61 40.99L206.77 20.71L209.83 30.85L217.56 25.02L230.53 16.40L240.65 25.02L248.31 12.85L252.94 25.02L261.31 25.02L265.16 30.85L280.83 9.30L284.39 25.02L298.82 20.71L311.83 20.71L315.17 6.76L323.83 12.85L325.26 27.55L334.41 25.02L346.63 6.76L356.25 25.02" fill="none" stroke="#f7a033" stroke-width="1.25" stroke-linejoin="round"/></svg><span class="t" style="left:1021.54px;top:634.00px;font-size:19.8px;line-height:26px;color:#f3f3f3;font-weight:700;letter-spacing:0.272px;transform:scaleX(1.1200);">125.6</span><span class="t" style="left:1082.99px;top:640.00px;font-size:13.8px;line-height:19px;color:#f3f3f3;font-weight:700;transform:scaleX(1.0709);">MH/s</span><span class="t" style="left:1020.79px;top:660.00px;font-size:12.2px;line-height:18px;color:#b3b8bd;transform:scaleX(1.0225);">Current Hash Rate</span><span class="t" style="left:1159.24px;top:634.00px;font-size:19.8px;line-height:26px;color:#f3f3f3;font-weight:700;letter-spacing:0.782px;transform:scaleX(1.1200);">$128.65</span><span class="t" style="left:1158.79px;top:660.00px;font-size:12.2px;line-height:18px;color:#b3b8bd;transform:scaleX(1.0747);">Current 24h&#x27;s estimation profit</span><div class="p" style="left:1004px;top:701px;width:388px;height:171.5px"></div><span class="t" style="left:1020.89px;top:719.00px;font-size:16px;line-height:21px;color:#f3f3f3;font-weight:700;">PCs Mining</span><div class="dr" style="left:1020.25px;top:753px"><i class="o"></i><i class="o"></i><i class="o"></i><i class="o"></i><i class="o"></i><i class="o"></i><i class="o"></i><i class="o"></i><i class="o"></i><i class="o"></i><i class="o"></i><i class="o"></i><i class="o"></i><i class="o"></i><i class="o"></i><i class="o"></i><i class="o"></i><i class="o"></i><i class="o"></i><i class="o"></i><i class="o"></i><i class="o"></i><i class="o"></i><i class="o"></i><i class="o"></i><i class="o"></i><i class="o"></i><i class="o"></i><i class="o"></i><i class="o"></i><i class="o"></i><i class="o"></i><i class="o"></i><i class="o"></i></div><div class="dr" style="left:1020.25px;top:763px"><i class="o"></i><i class="o"></i><i class="o"></i><i class="o"></i><i class="o"></i><i class="o"></i><i class="o"></i><i class="o"></i><i class="o"></i><i class="o"></i><i class="o"></i><i class="o"></i><i class="o"></i><i class="o"></i><i class="o"></i><i class="o"></i><i class="o"></i><i class="o"></i><i class="o"></i><i class="o"></i><i class="o"></i><i class="o"></i><i class="o"></i><i class="o"></i><i class="o"></i><i class="o"></i><i class="o"></i><i class="o"></i><i class="o"></i><i class="o"></i><i class="o"></i><i class="o"></i><i class="o"></i><i class="o"></i></div><div class="dr" style="left:1020.25px;top:773px"><i class="o"></i><i class="o"></i><i class="o"></i><i class="o"></i><i class="o"></i><i class="o"></i><i class="o"></i><i class="o"></i><i class="o"></i><i class="o"></i><i class="o"></i><i class="o"></i><i class="o"></i><i class="o"></i><i class="o"></i><i class="o"></i><i class="o"></i><i class="o"></i><i class="o"></i><i class="o"></i><i class="o"></i><i class="o"></i><i class="o"></i><i class="o"></i><i class="o"></i><i class="o"></i><i class="o"></i><i class="o"></i><i class="o"></i><i class="o"></i><i class="o"></i><i class="o"></i><i class="o"></i><i class="o"></i></div><div class="dr" style="left:1020.25px;top:783px"><i class="o"></i><i class="o"></i><i></i><i></i><i></i><i></i><i></i><i></i><i></i><i></i><i></i><i></i><i></i><i></i><i></i><i></i><i></i><i></i><i></i><i></i><i></i><i></i><i></i><i></i><i></i><i></i><i></i><i></i><i></i><i></i><i></i><i></i><i></i><i></i></div><div class="dr" style="left:1020.25px;top:793px"><i></i><i></i><i></i><i></i><i></i><i></i><i></i><i></i><i></i><i></i><i></i><i></i><i></i><i></i><i></i><i></i><i></i><i></i><i></i><i></i></div><span class="t" style="left:1022.50px;top:814.00px;font-size:19.8px;line-height:26px;color:#f3f3f3;font-weight:700;letter-spacing:0.208px;transform:scaleX(1.1200);">100</span><span class="t" style="left:1063.75px;top:820.00px;font-size:13.8px;line-height:19px;color:#f3f3f3;font-weight:700;letter-spacing:0.577px;transform:scaleX(1.1200);">/152</span><span class="t" style="left:1019.54px;top:840.00px;font-size:12.2px;line-height:18px;color:#b3b8bd;transform:scaleX(1.0219);">PCs Mining</span><span class="t" style="left:1130.24px;top:814.00px;font-size:19.8px;line-height:26px;color:#f3f3f3;font-weight:700;letter-spacing:0.344px;transform:scaleX(1.1200);">2.11</span><span class="t" style="left:1178.89px;top:820.00px;font-size:13.8px;line-height:19px;color:#f3f3f3;font-weight:700;transform:scaleX(1.0951);">kW/h</span><span class="t" style="left:1128.54px;top:840.00px;font-size:12.2px;line-height:18px;color:#b3b8bd;transform:scaleX(1.0447);">Power Consumption</span><div class="c" style="left:1004px;top:881.2px;width:388px"></div><span class="t" style="left:1015.89px;top:891.00px;font-size:16px;line-height:21px;color:#f3f3f3;font-weight:700;transform:scaleX(1.0805);">PC17</span><span class="t" style="left:1312.79px;top:891.00px;font-size:14.8px;line-height:20px;color:#f3f3f3;font-weight:700;transform:scaleX(1.0312);">25.6 MH/s</span><svg class="i" style="left:1288.60px;top:893.70px" width="17" height="14.2" viewBox="0 0 18 15" ><g fill="none" stroke="#f3f3f3" stroke-width="1.8" stroke-linecap="round" stroke-linejoin="round"><path d="M12.3 2.3A7.3 7.3 0 0 0 1.6 10.9Q1.9 13.1 4.0 13.1L14.0 13.1Q16.1 13.1 16.4 10.9A7.3 7.3 0 0 0 15.6 5.6"/></g><path fill="#f3f3f3" d="M14.8 2.8L9.9 10.1A1.65 1.65 0 1 1 7.5 8.1Z"/></svg><span class="t" style="left:1015.72px;top:917.00px;font-size:14px;line-height:20px;color:#b3b8bd;transform:scaleX(1.0641);">RTX 580 Aorus 5G</span><span class="t" style="left:1343.44px;top:917.00px;font-size:14px;line-height:20px;color:#72bd88;transform:scaleX(1.0768);">163°F</span><svg class="i" style="left:1323.65px;top:918.25px" width="8.8" height="17.65" viewBox="0 0 8.8 17.65" ><path fill="#72bd88" d="M4.4 0A2.9 2.9 0 0 1 7.3 2.9V9.8A4.4 4.4 0 1 1 1.5 9.8V2.9A2.9 2.9 0 0 1 4.4 0Z"/><path fill="#2c3540" fill-opacity=".9" d="M3.35 2.3h2.2v.95h-1.2v1.3h1.2v.95h-1.2v1.3h1.2v.95h-2.2z"/></svg></div></article>
<div class="abs" style="left:564.3px;top:251.3px;width:7.4px;height:7.4px;border-radius:50%;background:#f7a033;border:1px solid #fff"></div>
<aside class="abs" style="left:568px;top:169px;width:122px;height:79.6px;background:#464d55;border-radius:7px;box-shadow:0 3px 10px rgba(0,0,0,.35)"></aside>
<span class="t" style="left:576.79px;top:176.00px;font-size:12.6px;line-height:18px;color:#bdc1c5;transform:scaleX(1.0733);">01/01/22 · 15:32</span>
<svg class="i" style="left:577.50px;top:200.10px" width="17" height="14.2" viewBox="0 0 18 15" ><g fill="none" stroke="#f3f3f3" stroke-width="1.8" stroke-linecap="round" stroke-linejoin="round"><path d="M12.3 2.3A7.3 7.3 0 0 0 1.6 10.9Q1.9 13.1 4.0 13.1L14.0 13.1Q16.1 13.1 16.4 10.9A7.3 7.3 0 0 0 15.6 5.6"/></g><path fill="#f3f3f3" d="M14.8 2.8L9.9 10.1A1.65 1.65 0 1 1 7.5 8.1Z"/></svg>
<span class="t" style="left:601.44px;top:197.00px;font-size:14.8px;line-height:20px;color:#f3f3f3;font-weight:700;transform:scaleX(1.0425);">105.6 MH/s</span>
<svg class="i" style="left:576.90px;top:222.40px" width="18.2" height="17" viewBox="0 0 18.2 17" ><rect x="0.95" y="0.95" width="16.3" height="11.9" rx="1.2" fill="none" stroke="#f3f3f3" stroke-width="1.9"/><path fill="#f3f3f3" d="M7.7 13.4h2.8l.7 2h1.2q.6 0 .6.75t-.6.75H5.8q-.6 0-.6-.75t.6-.75h1.2z"/></svg>
<span class="t" style="left:602.00px;top:221.00px;font-size:14.6px;line-height:20px;color:#ececec;transform:scaleX(0.9946);">103</span>
<span class="t" style="left:627.20px;top:221.00px;font-size:14.6px;line-height:20px;color:#8d949a;transform:scaleX(1.1110);">/162</span>
</main></body></html>
